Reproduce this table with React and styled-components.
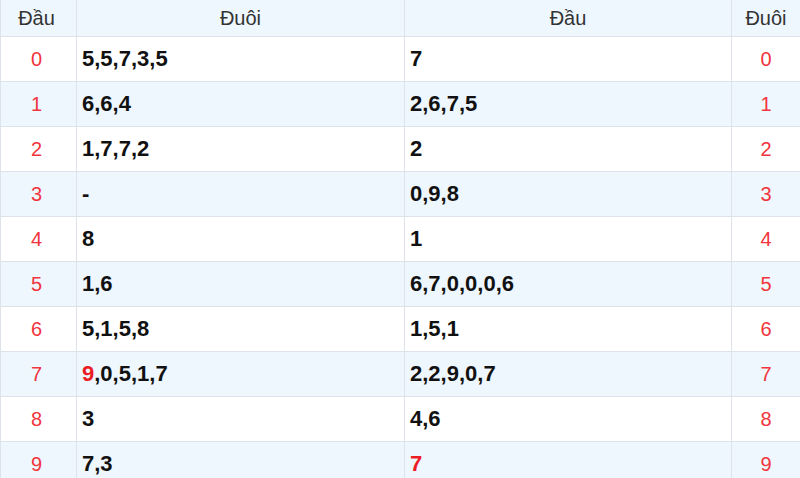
import React from "react";
import styled, { createGlobalStyle } from "styled-components";

const GlobalStyle = createGlobalStyle`
  html, body {
    margin: 0;
    padding: 0;
    background: #fff;
    font-family: "Liberation Sans", Arial, sans-serif;
  }
`;

const Table = styled.table`
  width: 800px;
  border-collapse: collapse;
  table-layout: fixed;
  font-family: "Liberation Sans", Arial, sans-serif;
`;

const HeadCell = styled.th`
  height: 36px;
  padding: 0 ${(p) => (p.$first ? "4px" : "0")} 0 0;
  font-size: 20px;
  font-weight: 400;
  color: #333;
  text-align: center;
  vertical-align: middle;
  background: #eef6fe;
  border: 1px solid #dee3ea;
  border-top: none;
`;

const Row = styled.tr`
  background: ${(p) => (p.$striped ? "#eef6fe" : "#fff")};
`;

const IndexCell = styled.td`
  height: 44px;
  padding: 0 ${(p) => (p.$first ? "4px" : "0")} 0 0;
  font-size: 20px;
  color: #f2343c;
  text-align: center;
  vertical-align: middle;
  border: 1px solid #dee3ea;
`;

const ValueCell = styled.td`
  height: 44px;
  padding: 0 0 0 5px;
  font-size: 22px;
  font-weight: 700;
  color: #111;
  vertical-align: middle;
  border: 1px solid #dee3ea;
`;

const Hot = styled.span`
  color: #ec1c24;
`;

const rows = [
  { tail: [["5,5,7,3,5"]], head: [["7"]] },
  { tail: [["6,6,4"]], head: [["2,6,7,5"]] },
  { tail: [["1,7,7,2"]], head: [["2"]] },
  { tail: [["-"]], head: [["0,9,8"]] },
  { tail: [["8"]], head: [["1"]] },
  { tail: [["1,6"]], head: [["6,7,0,0,0,6"]] },
  { tail: [["5,1,5,8"]], head: [["1,5,1"]] },
  { tail: [["9", true], [",0,5,1,7"]], head: [["2,2,9,0,7"]] },
  { tail: [["3"]], head: [["4,6"]] },
  { tail: [["7,3"]], head: [["7", true]] },
];

const renderParts = (parts) =>
  parts.map(([text, hot], i) => (hot ? <Hot key={i}>{text}</Hot> : <React.Fragment key={i}>{text}</React.Fragment>));

export default function App() {
  return (
    <>
      <GlobalStyle />
      <Table>
        <colgroup>
          <col style={{ width: 76 }} />
          <col style={{ width: 328 }} />
          <col style={{ width: 327 }} />
          <col style={{ width: 69 }} />
        </colgroup>
        <thead>
          <tr>
            <HeadCell $first>Đầu</HeadCell>
            <HeadCell>Đuôi</HeadCell>
            <HeadCell>Đầu</HeadCell>
            <HeadCell>Đuôi</HeadCell>
          </tr>
        </thead>
        <tbody>
          {rows.map((r, i) => (
            <Row key={i} $striped={i % 2 === 1}>
              <IndexCell $first>{i}</IndexCell>
              <ValueCell>{renderParts(r.tail)}</ValueCell>
              <ValueCell>{renderParts(r.head)}</ValueCell>
              <IndexCell>{i}</IndexCell>
            </Row>
          ))}
        </tbody>
      </Table>
    </>
  );
}
